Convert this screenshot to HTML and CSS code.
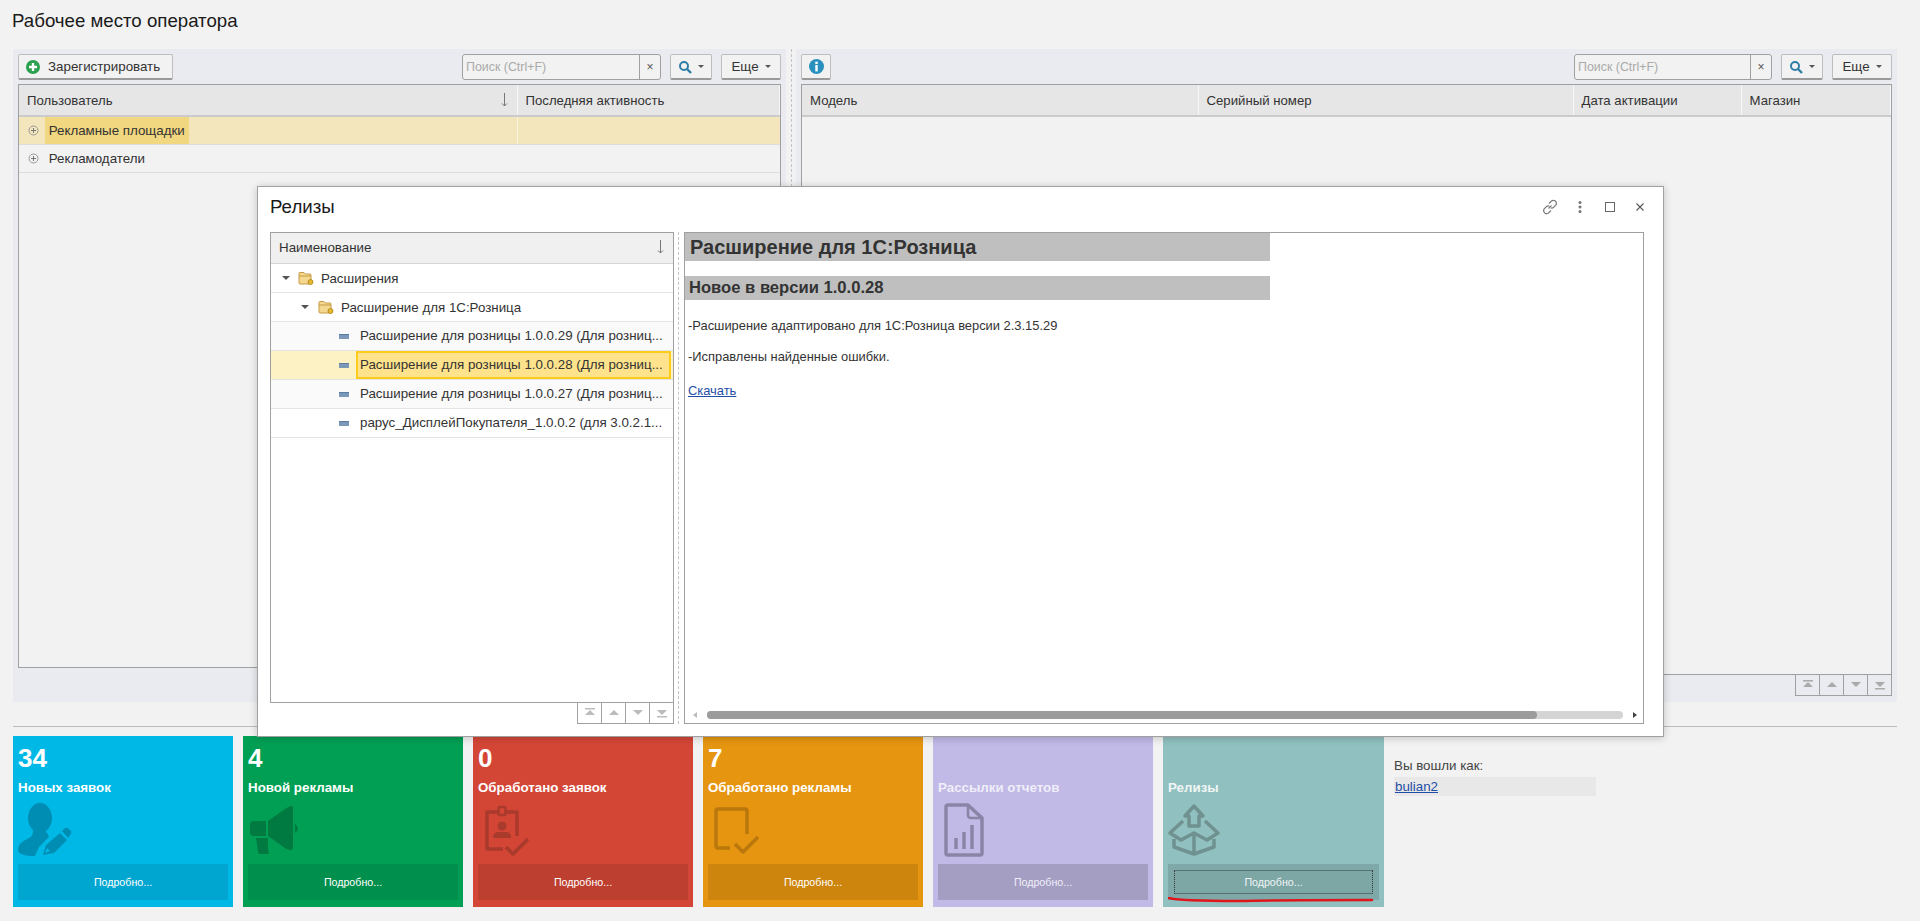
FILE: index.html
```html
<!DOCTYPE html>
<html lang="ru">
<head>
  <meta charset="UTF-8">
  <title>Рабочее место оператора</title>
  <link rel="stylesheet" href="styles.css">
</head>
<body>
  <h1 class="page-title">Рабочее место оператора</h1>

  <div class="workspace">
    <!-- Users panel -->
    <section class="panel panel-users">
      <div class="toolbar">
        <button class="btn btn-register">
          <svg width="14" height="14" viewBox="0 0 14 14"><circle cx="7" cy="7" r="7" fill="#2ba14f"/><path d="M7 3v8M3 7h8" stroke="#fff" stroke-width="2.4"/></svg>
          Зарегистрировать
        </button>
        <div class="search search-users">
          <span class="search-text">Поиск (Ctrl+F)</span>
          <span class="search-clear">×</span>
        </div>
        <button class="btn btn-find">
          <svg width="14" height="14" viewBox="0 0 14 14"><circle cx="6" cy="6" r="4" fill="none" stroke="#2f7ea8" stroke-width="2"/><path d="M9 9l4 4" stroke="#2f7ea8" stroke-width="2.4"/></svg>
          <span class="caret"></span>
        </button>
        <button class="btn btn-more">Еще <span class="caret"></span></button>
      </div>
      <div class="grid-frame">
        <table class="grid">
          <colgroup><col class="col-user"><col></colgroup>
          <thead>
            <tr>
              <th><div class="th-sort">Пользователь <svg class="sort-arrow" width="7" height="14" viewBox="0 0 7 14"><path d="M3.500 0V13M1 10.500L3.500 13L6 10.500" fill="none" stroke="#777"/></svg></div></th>
              <th>Последняя активность</th>
            </tr>
          </thead>
          <tbody>
            <tr class="row-current">
              <td class="tree-cell">
                <svg class="expander" width="11" height="11" viewBox="0 0 11 11"><circle cx="5.500" cy="5.500" r="4.500" fill="none" stroke="#999"/><path d="M5.500 3v5M3 5.500h5" stroke="#777"/></svg>
                <span class="cell-mark">Рекламные площадки</span>
              </td>
              <td></td>
            </tr>
            <tr>
              <td colspan="2" class="tree-cell">
                <svg class="expander" width="11" height="11" viewBox="0 0 11 11"><circle cx="5.500" cy="5.500" r="4.500" fill="none" stroke="#999"/><path d="M5.500 3v5M3 5.500h5" stroke="#777"/></svg>
                <span class="cell-text">Рекламодатели</span>
              </td>
            </tr>
          </tbody>
        </table>
      </div>
    </section>

    <div class="splitter"></div>

    <!-- Devices panel -->
    <section class="panel panel-devices">
      <div class="toolbar">
        <button class="btn btn-info">
          <svg width="15" height="15" viewBox="0 0 15 15"><circle cx="7.500" cy="7.500" r="7.500" fill="#2a90bd"/><rect x="6.300" y="2.600" width="2.400" height="2.400" fill="#fff"/><rect x="6.300" y="6" width="2.400" height="6.400" fill="#fff"/></svg>
        </button>
        <div class="search search-devices">
          <span class="search-text">Поиск (Ctrl+F)</span>
          <span class="search-clear">×</span>
        </div>
        <button class="btn btn-find">
          <svg width="14" height="14" viewBox="0 0 14 14"><circle cx="6" cy="6" r="4" fill="none" stroke="#2f7ea8" stroke-width="2"/><path d="M9 9l4 4" stroke="#2f7ea8" stroke-width="2.4"/></svg>
          <span class="caret"></span>
        </button>
        <button class="btn btn-more">Еще <span class="caret"></span></button>
      </div>
      <div class="grid-frame">
        <table class="grid">
          <colgroup><col class="col-model"><col class="col-serial"><col class="col-date"><col></colgroup>
          <thead>
            <tr><th>Модель</th><th>Серийный номер</th><th>Дата активации</th><th>Магазин</th></tr>
          </thead>
        </table>
      </div>
      <div class="pager">
        <span class="pager-btn"><svg width="14" height="10" viewBox="0 0 14 10"><path d="M2 0h10v1.500H2zM7 2l5 5H2z" fill="#aaa"/></svg></span>
        <span class="pager-btn"><svg width="14" height="10" viewBox="0 0 14 10"><path d="M7 2l5 5H2z" fill="#aaa"/></svg></span>
        <span class="pager-btn"><svg width="14" height="10" viewBox="0 0 14 10"><path d="M2 2h10L7 7z" fill="#aaa"/></svg></span>
        <span class="pager-btn"><svg width="14" height="10" viewBox="0 0 14 10"><path d="M2 2h10L7 7zM2 8h10v1.500H2z" fill="#aaa"/></svg></span>
      </div>
    </section>
  </div>

  <hr class="divider">

  <!-- Counters -->
  <div class="cards">
    <div class="card card-blue">
      <div class="card-num">34</div>
      <div class="card-title">Новых заявок</div>
      <svg class="card-icon" width="60" height="56" viewBox="0 0 60 56">
        <ellipse cx="27" cy="15" rx="12" ry="15"/>
        <path d="M20 27C20 32 19 34 14 36C8 39 5 42 5 47C5 51 12 53 22 53L26 44L36 34L33 28Z"/>
        <path d="M30 52L33 42L47 30L54 37L41 50Z"/>
        <path d="M32 50L34 45L37 48Z" fill="#00b8e6"/>
        <path d="M49 28L52 25Q54 24 56 26L58 28Q59 30 57 32L55 35Z"/>
      </svg>
      <div class="card-more">Подробно...</div>
    </div>
    <div class="card card-green">
      <div class="card-num">4</div>
      <div class="card-title">Новой рекламы</div>
      <svg class="card-icon" width="60" height="56" viewBox="0 0 60 56">
        <path d="M11 18H23V33H11Q7 33 7 29V22Q7 18 11 18Z"/>
        <path d="M25 18L42 6Q46 3 49 3Q50 3 50 6V44Q50 47 48 47Q45 47 42 45L25 33Z"/>
        <path d="M52 21Q55 23 55 26Q55 28 52 30Z"/>
        <path d="M13 35H25V45L26 51H16Q15 51 15 49Z"/>
      </svg>
      <div class="card-more">Подробно...</div>
    </div>
    <div class="card card-red">
      <div class="card-num">0</div>
      <div class="card-title">Обработано заявок</div>
      <svg class="card-icon" width="60" height="56" viewBox="0 0 60 56">
        <path class="line" d="M25 9H14V46H30M33 9H44V33"/>
        <rect class="line-thin" x="25.500" y="4" width="7" height="8" rx="1.500"/>
        <circle cx="29" cy="23" r="4.500"/>
        <path d="M20 35Q20 29 25 29H33Q38 29 38 35Z"/>
        <path class="line" d="M33 44L40 51L55 36"/>
      </svg>
      <div class="card-more">Подробно...</div>
    </div>
    <div class="card card-orange">
      <div class="card-num">7</div>
      <div class="card-title">Обработано рекламы</div>
      <svg class="card-icon" width="60" height="56" viewBox="0 0 60 56">
        <path class="line" d="M27 45H15Q13 45 13 43V8Q13 6 15 6H42Q44 6 44 8V31"/>
        <path class="line" d="M32 41L40 49L55 34"/>
      </svg>
      <div class="card-more">Подробно...</div>
    </div>
    <div class="card card-violet">
      <div class="card-num"></div>
      <div class="card-title">Рассылки отчетов</div>
      <svg class="card-icon" width="60" height="56" viewBox="0 0 60 56">
        <path class="line" d="M35 2H15Q13 2 13 4V50Q13 52 15 52H47Q49 52 49 50V15Z"/>
        <path class="line-thin" d="M35 2V12Q35 15 38 15H49"/>
        <path class="line" d="M23 35V46M31 29V46M39 22V46"/>
      </svg>
      <div class="card-more">Подробно...</div>
    </div>
    <div class="card card-teal">
      <div class="card-num"></div>
      <div class="card-title">Релизы</div>
      <svg class="card-icon" width="60" height="56" viewBox="0 0 60 56">
        <path class="line" d="M31 3L40 13H36V23H26V13H22Z"/>
        <path class="line" d="M20 18L7 30L18 37L31 30L44 37L55 30L42 18M31 30V51M11 36V44L31 51L51 44V36"/>
      </svg>
      <div class="card-more"><span class="card-focus">Подробно...</span></div>
      <svg class="scribble" width="206" height="6" viewBox="0 0 206 6"><path d="M1 1C8 3 20 4 70 4C110 3 160 3 204 3" fill="none" stroke="#e0161c" stroke-width="2.600" stroke-linecap="round"/></svg>
    </div>
    <div class="login-info">
      <div class="login-label">Вы вошли как:</div>
      <div class="login-name"><a href="#">bulian2</a></div>
    </div>
  </div>

  <!-- Releases window -->
  <div class="modal">
    <div class="modal-head">
      <span class="modal-title">Релизы</span>
      <div class="modal-tools">
        <svg width="16" height="16" viewBox="0 0 16 16" fill="none" stroke="#777" stroke-width="1.100"><path d="M6.500 9.500L9.500 6.500"/><path d="M7 4.500L9.500 2Q11 .8 13 1.800Q15.200 3.500 14 6L11.500 8.500Q10 9.500 8.700 8.800"/><path d="M9 11.500L6.500 14Q5 15.200 3 14.200Q.8 12.500 2 10L4.500 7.500Q6 6.500 7.300 7.200"/></svg>
        <svg width="4" height="12" viewBox="0 0 4 12" fill="#777"><circle cx="2" cy="1.500" r="1.500"/><circle cx="2" cy="6" r="1.500"/><circle cx="2" cy="10.500" r="1.500"/></svg>
        <svg width="10" height="10" viewBox="0 0 10 10"><rect x=".5" y=".5" width="9" height="9" fill="none" stroke="#666"/></svg>
        <svg width="8" height="8" viewBox="0 0 8 8"><path d="M.5.5l7 7M7.500.5l-7 7" stroke="#555" stroke-width="1.100"/></svg>
      </div>
    </div>
    <div class="modal-body">
      <div class="tree-side">
        <div class="tree-frame">
          <div class="tree-head">Наименование <svg class="sort-arrow" width="7" height="14" viewBox="0 0 7 14"><path d="M3.500 0V13M1 10.500L3.500 13L6 10.500" fill="none" stroke="#777"/></svg></div>
          <div class="tree-row level-1">
            <span class="tri"></span>
            <svg class="folder" width="16" height="14" viewBox="0 0 16 14"><path d="M1 12V2.500Q1 1.500 2 1.500H6L7.500 3H12Q13 3 13 4V12Q13 13 12 13H2Q1 13 1 12Z" fill="#f4d88f" stroke="#c69a45"/><path d="M1 5H13" stroke="#c69a45"/><circle cx="12.500" cy="11" r="2.500" fill="#e9b92c" stroke="#a98320" stroke-width=".8"/></svg>
            <span class="tree-text">Расширения</span>
          </div>
          <div class="tree-row level-2">
            <span class="tri"></span>
            <svg class="folder" width="16" height="14" viewBox="0 0 16 14"><path d="M1 12V2.500Q1 1.500 2 1.500H6L7.500 3H12Q13 3 13 4V12Q13 13 12 13H2Q1 13 1 12Z" fill="#f4d88f" stroke="#c69a45"/><path d="M1 5H13" stroke="#c69a45"/><circle cx="12.500" cy="11" r="2.500" fill="#e9b92c" stroke="#a98320" stroke-width=".8"/></svg>
            <span class="tree-text">Расширение для 1С:Розница</span>
          </div>
          <div class="tree-row level-3 row-alt">
            <span class="item-mark"></span>
            <span class="item-text">Расширение для розницы 1.0.0.29 (Для розниц...</span>
          </div>
          <div class="tree-row level-3 row-selected">
            <span class="item-mark"></span>
            <span class="item-text">Расширение для розницы 1.0.0.28 (Для розниц...</span>
          </div>
          <div class="tree-row level-3 row-alt">
            <span class="item-mark"></span>
            <span class="item-text">Расширение для розницы 1.0.0.27 (Для розниц...</span>
          </div>
          <div class="tree-row level-3">
            <span class="item-mark"></span>
            <span class="item-text">рарус_ДисплейПокупателя_1.0.0.2 (для 3.0.2.1...</span>
          </div>
        </div>
        <div class="pager">
          <span class="pager-btn"><svg width="14" height="10" viewBox="0 0 14 10"><path d="M2 0h10v1.500H2zM7 2l5 5H2z" fill="#bbb"/></svg></span>
          <span class="pager-btn"><svg width="14" height="10" viewBox="0 0 14 10"><path d="M7 2l5 5H2z" fill="#bbb"/></svg></span>
          <span class="pager-btn"><svg width="14" height="10" viewBox="0 0 14 10"><path d="M2 2h10L7 7z" fill="#bbb"/></svg></span>
          <span class="pager-btn"><svg width="14" height="10" viewBox="0 0 14 10"><path d="M2 2h10L7 7zM2 8h10v1.500H2z" fill="#bbb"/></svg></span>
        </div>
      </div>
      <div class="splitter splitter-modal"></div>
      <div class="release-frame">
        <div class="release-text">
          <h2 class="release-h1">Расширение для 1С:Розница</h2>
          <h3 class="release-h2">Новое в версии 1.0.0.28</h3>
          <p>-Расширение адаптировано для 1С:Розница версии 2.3.15.29</p>
          <p>-Исправлены найденные ошибки.</p>
          <p class="release-link"><a href="#">Скачать</a></p>
        </div>
        <div class="hscroll">
          <span class="arrow-left"></span>
          <div class="hscroll-track"><div class="hscroll-thumb"></div></div>
          <span class="arrow-right"></span>
        </div>
      </div>
    </div>
  </div>
</body>
</html>
```

FILE: styles.css
```css
html, body {
  height: 921px;
}
body {
  margin: 0;
  position: relative;
  overflow: hidden;
  background-color: #f2f2f2;
  font-family: "Liberation Sans", Arial, sans-serif;
  font-size: 13.33px;
  color: #333;
}
a {
  color: #1f4ea6;
}
.page-title {
  margin: 0;
  height: 49px;
  padding: 10px 0 0 12px;
  box-sizing: border-box;
  font-size: 18.67px;
  line-height: 22px;
  font-weight: normal;
  color: #1a1a1a;
}

/* Top panels */
.workspace {
  display: flex;
  height: 653px;
  margin: 0 23px 0 13px;
}
.panel {
  display: flex;
  flex-direction: column;
  box-sizing: border-box;
  padding: 5px 5px 6px;
  background-color: #e9ebf0;
}
.panel-users {
  width: 773px;
  padding-bottom: 34px;
}
.panel-devices {
  flex: 1;
}
.splitter {
  width: 10px;
  position: relative;
}
.splitter::after {
  content: "";
  position: absolute;
  left: 5px;
  top: 0;
  bottom: 0;
  border-left: 1px dashed #c4c4c4;
}
.toolbar {
  display: flex;
  height: 26px;
  gap: 9px;
  margin-bottom: 4px;
}
.btn {
  display: flex;
  align-items: center;
  justify-content: center;
  gap: 6px;
  box-sizing: border-box;
  height: 26px;
  padding: 0;
  background-color: #f2f2f2;
  border: 1px solid #bdbdbd;
  border-bottom: 2px solid #9a9a9a;
  border-radius: 2px;
  font: inherit;
  color: #333;
}
.btn-register {
  width: 155px;
  justify-content: flex-start;
  gap: 8px;
  padding-left: 7px;
}
.btn-find {
  width: 42px;
}
.btn-more {
  width: 60px;
}
.btn-info {
  width: 30px;
}
.caret {
  width: 0;
  height: 0;
  border-left: 3px solid transparent;
  border-right: 3px solid transparent;
  border-top: 3px solid #555;
}
.search {
  display: flex;
  box-sizing: border-box;
  height: 26px;
  margin-left: auto;
  background-color: #f2f2f2;
  border: 1px solid #a0a0a0;
  border-radius: 3px;
  line-height: 24px;
}
.search-users {
  width: 199px;
}
.search-devices {
  width: 198px;
}
.search-text {
  flex: 1;
  padding-left: 3px;
  font-size: 12.4px;
  color: #aaa;
}
.search-clear {
  width: 20px;
  text-align: center;
  font-size: 12px;
  color: #555;
  border-left: 1px solid #a0a0a0;
}

/* Grids */
.grid-frame {
  flex: 1;
  border: 1px solid #a0a0a0;
  background-color: #f2f2f2;
}
.grid {
  width: 100%;
  table-layout: fixed;
  border-collapse: collapse;
}
.col-user {
  width: 498px;
}
.col-model {
  width: 396px;
}
.col-serial {
  width: 375px;
}
.col-date {
  width: 168px;
}
.grid th {
  height: 31px;
  padding: 0 8px;
  box-sizing: border-box;
  background-color: #e6e6e6;
  border-right: 1px solid #f7f7f7;
  border-bottom: 2px solid #cbcbcb;
  font-size: 13.2px;
  font-weight: normal;
  text-align: left;
  white-space: nowrap;
}
.th-sort {
  display: flex;
  justify-content: space-between;
  align-items: center;
  padding-right: 1px;
}
.sort-arrow {
  flex-shrink: 0;
}
.grid td {
  height: 28px;
  padding: 0;
  box-sizing: border-box;
  border-bottom: 1px solid #dcdcdc;
}
.row-current td:first-child {
  border-right: 1px solid #f9f3de;
}
.tree-cell .expander {
  vertical-align: middle;
  margin: 0 2px 0 9px;
}
.cell-text {
  vertical-align: middle;
  margin-left: 4px;
}
.cell-mark {
  display: inline-block;
  vertical-align: middle;
  height: 27px;
  line-height: 27px;
  padding: 0 4px;
  background-color: #f1d77f;
}
.row-current td {
  background-color: #f3e6bc;
}
.pager {
  display: flex;
  justify-content: flex-end;
}
.pager-btn {
  display: flex;
  align-items: center;
  justify-content: center;
  box-sizing: border-box;
  width: 24px;
  height: 21px;
  border: 1px solid #a0a0a0;
  border-top: 0;
  border-right: 0;
}
.pager-btn:last-child {
  width: 25px;
  border-right: 1px solid #a0a0a0;
}

/* Bottom strip */
.divider {
  height: 1px;
  margin: 24px 23px 9px 13px;
  padding: 0;
  border: 0;
  background-color: #bcbcbc;
}
.cards {
  display: flex;
  gap: 10px;
  margin-left: 13px;
}
.card {
  position: relative;
  display: flex;
  flex-direction: column;
  box-sizing: border-box;
  width: 220px;
  height: 171px;
  padding: 6px 5px 5px;
  color: #fff;
}
.card-num {
  height: 32px;
  font-size: 26px;
  line-height: 32px;
  font-weight: bold;
}
.card-title {
  height: 18px;
  margin-top: 5px;
  font-size: 13.33px;
  line-height: 18px;
  font-weight: bold;
}
.card-icon {
  display: block;
  margin: 6px 0 5px -5px;
  fill: var(--icon);
}
.line {
  fill: none;
  stroke: var(--icon);
  stroke-width: 3.5;
  stroke-linejoin: round;
}
.line-thin {
  fill: none;
  stroke: var(--icon);
  stroke-width: 2.5;
  stroke-linejoin: round;
}
.card-more {
  display: flex;
  align-items: center;
  justify-content: center;
  height: 36px;
  font-size: 10.67px;
  background-color: var(--more);
}
.card-blue {
  background-color: #00b8e6;
  --icon: #008db3;
  --more: #00a6cf;
}
.card-green {
  background-color: #009f54;
  --icon: #007a40;
  --more: #008f4c;
}
.card-red {
  background-color: #d34636;
  --icon: #a93a2c;
  --more: #bd3f30;
}
.card-orange {
  background-color: #e5950f;
  --icon: #b9770d;
  --more: #cd850e;
}
.card-violet {
  background-color: #c1b9e6;
  --icon: #8a85a6;
  --more: #a49ec3;
  color: #f0eef8;
}
.card-teal {
  width: 221px;
  background-color: #90c0bf;
  --icon: #6f9190;
  --more: #7fa9a8;
  color: #f0f5f5;
}
.card-focus {
  display: flex;
  align-items: center;
  justify-content: center;
  box-sizing: border-box;
  width: 199px;
  height: 24px;
  background-color: #7ca7a5;
  border-top: 1px solid #58706f;
  border-bottom: 1px solid #58706f;
  border-left: 1px dotted #333;
  border-right: 1px dotted #333;
}
.scribble {
  position: absolute;
  left: 5px;
  bottom: 4px;
}
.login-info {
  width: 202px;
  padding-top: 22px;
}
.login-label {
  height: 19px;
  line-height: 15px;
  color: #444;
}
.login-name {
  height: 19px;
  line-height: 19px;
  padding-left: 1px;
  background-color: #e8e8e8;
}

/* Releases window */
.modal {
  position: absolute;
  left: 257px;
  top: 186px;
  display: flex;
  flex-direction: column;
  box-sizing: border-box;
  width: 1407px;
  height: 551px;
  padding: 0 19px 12px 12px;
  background-color: #fff;
  border: 1px solid #a0a0a0;
  box-shadow: 0 1px 8px rgba(0, 0, 0, 0.2);
}
.modal-head {
  display: flex;
  align-items: center;
  justify-content: space-between;
  box-sizing: border-box;
  height: 45px;
  padding-bottom: 5px;
  flex-shrink: 0;
}
.modal-title {
  font-size: 18.67px;
  color: #1a1a1a;
}
.modal-tools {
  display: flex;
  align-items: center;
}
.modal-tools svg:nth-child(2) {
  margin-left: 20px;
}
.modal-tools svg:nth-child(3) {
  margin-left: 23px;
}
.modal-tools svg:nth-child(4) {
  margin-left: 21px;
}
.modal-body {
  flex: 1;
  display: flex;
  min-height: 0;
}
.tree-side {
  display: flex;
  flex-direction: column;
  width: 404px;
}
.tree-frame {
  flex: 1;
  border: 1px solid #a0a0a0;
}
.tree-head {
  display: flex;
  justify-content: space-between;
  align-items: center;
  box-sizing: border-box;
  height: 31px;
  padding: 0 9px 2px 8px;
  background-color: #f0f0f0;
  border-bottom: 1px solid #d6d6d6;
}
.tree-row {
  display: flex;
  align-items: center;
  box-sizing: border-box;
  height: 29px;
  border-bottom: 1px solid #e4e4e4;
}
.level-1 {
  padding-left: 11px;
}
.level-2 {
  padding-left: 30px;
}
.level-3 {
  padding-left: 68px;
}
.tri {
  width: 0;
  height: 0;
  margin-right: 9px;
  border-left: 4px solid transparent;
  border-right: 4px solid transparent;
  border-top: 4px solid #555;
}
.level-1 .tri {
  margin-right: 8px;
}
.folder {
  margin-right: 7px;
}
.item-mark {
  flex-shrink: 0;
  width: 10px;
  height: 5px;
  background-color: #7a97b8;
  border-top: 1px solid #5c7da3;
  box-sizing: border-box;
}
.item-text {
  flex: 1;
  min-width: 0;
  margin: 0 2px 0 7px;
  padding: 0 2px;
  overflow: hidden;
  white-space: nowrap;
  line-height: 24px;
  border: 2px solid transparent;
}
.row-alt {
  background-color: #fafafa;
}
.row-selected {
  background-color: #fdf2c4;
}
.row-selected .item-text {
  background-color: #fee38c;
  border-color: #fccb1c;
}
.splitter-modal {
  width: 10px;
}
.splitter-modal::after {
  left: 4px;
}
.release-frame {
  flex: 1;
  display: flex;
  flex-direction: column;
  border: 1px solid #a0a0a0;
}
.release-text {
  flex: 1;
}
.release-h1 {
  width: 585px;
  height: 28px;
  margin: 0 0 15px;
  padding-left: 5px;
  box-sizing: border-box;
  background-color: #bfbfbf;
  font-size: 20px;
  line-height: 28px;
}
.release-h2 {
  width: 585px;
  height: 24px;
  margin: 0 0 18px;
  padding-left: 4px;
  box-sizing: border-box;
  background-color: #bfbfbf;
  font-size: 16.6px;
  line-height: 24px;
}
.release-text p {
  margin: 0 0 16px 3px;
  line-height: 15px;
  font-size: 12.9px;
}
.release-text .release-link {
  margin-top: 19px;
}
.hscroll {
  display: flex;
  align-items: center;
  height: 16px;
  padding: 0 6px 0 8px;
}
.arrow-left {
  width: 0;
  height: 0;
  margin-right: 10px;
  border-top: 3.5px solid transparent;
  border-bottom: 3.5px solid transparent;
  border-right: 4px solid #bbb;
}
.arrow-right {
  width: 0;
  height: 0;
  margin-left: 10px;
  border-top: 3.5px solid transparent;
  border-bottom: 3.5px solid transparent;
  border-left: 4px solid #444;
}
.hscroll-track {
  flex: 1;
  height: 8px;
  border-radius: 4px;
  background-color: #d4d4d4;
}
.hscroll-thumb {
  width: 90.6%;
  height: 8px;
  border-radius: 4px;
  background-color: #9c9c9c;
}
```
